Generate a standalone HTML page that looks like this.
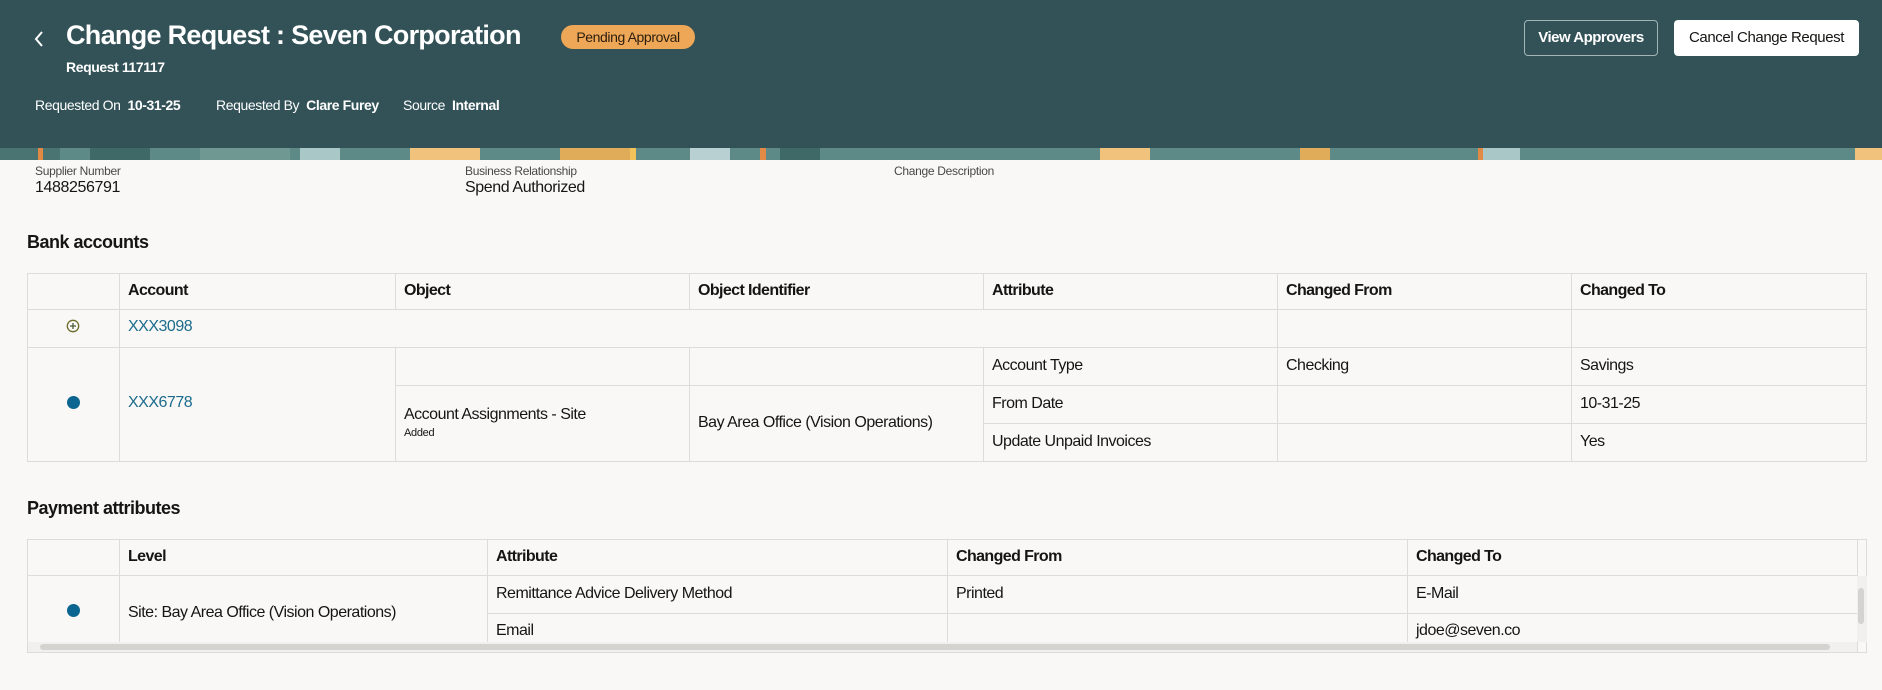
<!DOCTYPE html>
<html><head><meta charset="utf-8">
<style>
*{margin:0;padding:0;box-sizing:border-box}
body{width:1882px;height:690px;background:#f9f8f6;font-family:"Liberation Sans",sans-serif;color:#161513;position:relative;overflow:hidden}
.a{position:absolute;white-space:nowrap}
.hdr{position:absolute;left:0;top:0;width:1882px;height:148px;background:#325257}
.band{position:absolute;left:0;top:148px;width:1882px;height:12px;background:#5d8a86;overflow:hidden}
.band i{position:absolute;top:0;height:12px;display:block}
.w{color:#fff}
.tbl{position:absolute;border:1px solid #dedcd8;background:#f9f8f6}
.hl{position:absolute;height:1px;background:#dedcd8}
.vl{position:absolute;width:1px;background:#dedcd8}
.t{position:absolute;font-size:16px;white-space:nowrap;letter-spacing:-0.5px}
.th{font-weight:bold;letter-spacing:-0.6px}
.lnk{color:#1c6b8c}
</style></head><body>
<div class="hdr"></div>
<div class="band">
<i style="left:0;width:60px;background:#4a7471"></i>
<i style="left:38px;width:5px;background:#e08a45"></i>
<i style="left:90px;width:60px;background:#3f6966"></i>
<i style="left:200px;width:90px;background:#6f9893"></i>
<i style="left:300px;width:40px;background:#a9c7c6"></i>
<i style="left:410px;width:70px;background:#f0c27c"></i>
<i style="left:560px;width:70px;background:#e0ac5a"></i>
<i style="left:630px;width:6px;background:#f2c35a"></i>
<i style="left:690px;width:40px;background:#b8d0d2"></i>
<i style="left:760px;width:6px;background:#e08a45"></i>
<i style="left:780px;width:40px;background:#3f6966"></i>
<i style="left:1480px;width:40px;background:#a9c7c6"></i>
<i style="left:1478px;width:5px;background:#e08a45"></i>
<i style="left:1855px;width:27px;background:#f0c27c"></i>
<i style="left:1100px;width:50px;background:#f0c27c"></i>
<i style="left:1300px;width:30px;background:#e0ac5a"></i>
</div>

<svg class="a" style="left:33px;top:30px" width="12" height="18" viewBox="0 0 12 18"><path d="M9 2 L3 9 L9 16" stroke="#fff" stroke-width="2" fill="none"/></svg>
<div class="a w" style="left:66px;top:20px;font-size:27px;font-weight:bold;letter-spacing:-0.7px">Change Request : Seven Corporation</div>
<div class="a" style="left:561px;top:25px;width:134px;height:24px;border-radius:12px;background:#eda756;color:#2b1d0e;font-size:14px;line-height:24px;text-align:center;letter-spacing:-0.4px">Pending Approval</div>
<div class="a w" style="left:66px;top:59px;font-size:14px;font-weight:bold;letter-spacing:-0.4px">Request 117117</div>
<div class="a w" style="left:35px;top:97px;font-size:14px;letter-spacing:-0.4px">Requested On&nbsp; <b>10-31-25</b></div>
<div class="a w" style="left:216px;top:97px;font-size:14px;letter-spacing:-0.4px">Requested By&nbsp; <b>Clare Furey</b></div>
<div class="a w" style="left:403px;top:97px;font-size:14px;letter-spacing:-0.4px">Source&nbsp; <b>Internal</b></div>

<div class="a w" style="left:1524px;top:20px;width:134px;height:36px;border:1px solid #a3b5b7;border-radius:4px;font-size:15px;font-weight:bold;line-height:34px;text-align:center;letter-spacing:-0.5px">View Approvers</div>
<div class="a" style="left:1674px;top:20px;width:185px;height:36px;background:#fff;border-radius:4px;font-size:15px;line-height:36px;text-align:center;letter-spacing:-0.4px;color:#161513">Cancel Change Request</div>

<div class="a" style="left:35px;top:164px;font-size:12px;color:#4a4845;letter-spacing:-0.3px">Supplier Number</div>
<div class="a" style="left:35px;top:179px;font-size:16px;letter-spacing:-0.4px">1488256791</div>
<div class="a" style="left:465px;top:164px;font-size:12px;color:#4a4845;letter-spacing:-0.3px">Business Relationship</div>
<div class="a" style="left:465px;top:179px;font-size:16px;letter-spacing:-0.4px">Spend Authorized</div>
<div class="a" style="left:894px;top:164px;font-size:12px;color:#4a4845;letter-spacing:-0.3px">Change Description</div>

<div class="a" style="left:27px;top:232px;font-size:18px;font-weight:bold;letter-spacing:-0.5px">Bank accounts</div>

<div class="tbl" style="left:27px;top:273px;width:1840px;height:189px"></div>
<div class="hl" style="left:27px;top:309px;width:1840px"></div>
<div class="hl" style="left:27px;top:347px;width:1840px"></div>
<div class="hl" style="left:395px;top:385px;width:1472px"></div>
<div class="hl" style="left:983px;top:423px;width:884px"></div>
<div class="vl" style="left:119px;top:273px;height:189px"></div>
<div class="vl" style="left:395px;top:273px;height:36px"></div>
<div class="vl" style="left:395px;top:347px;height:115px"></div>
<div class="vl" style="left:689px;top:273px;height:36px"></div>
<div class="vl" style="left:689px;top:347px;height:115px"></div>
<div class="vl" style="left:983px;top:273px;height:36px"></div>
<div class="vl" style="left:983px;top:347px;height:115px"></div>
<div class="vl" style="left:1277px;top:273px;height:189px"></div>
<div class="vl" style="left:1571px;top:273px;height:189px"></div>

<div class="t th" style="left:128px;top:282px">Account</div>
<div class="t th" style="left:404px;top:282px">Object</div>
<div class="t th" style="left:698px;top:282px">Object Identifier</div>
<div class="t th" style="left:992px;top:282px">Attribute</div>
<div class="t th" style="left:1286px;top:282px">Changed From</div>
<div class="t th" style="left:1580px;top:282px">Changed To</div>

<svg class="a" style="left:66px;top:319px" width="14" height="14" viewBox="0 0 14 14"><circle cx="7" cy="7" r="5.7" fill="none" stroke="#6b6b2a" stroke-width="1.3"/><path d="M7 4v6M4 7h6" stroke="#4a5a3a" stroke-width="1.3"/></svg>
<div class="t lnk" style="left:128px;top:318px">XXX3098</div>

<div class="a" style="left:67px;top:396px;width:13px;height:13px;border-radius:50%;background:#0c6590"></div>
<div class="t lnk" style="left:128px;top:394px">XXX6778</div>
<div class="t" style="left:404px;top:406px">Account Assignments - Site</div>
<div class="a" style="left:404px;top:427px;font-size:11px;letter-spacing:-0.3px">Added</div>
<div class="t" style="left:698px;top:414px">Bay Area Office (Vision Operations)</div>
<div class="t" style="left:992px;top:357px">Account Type</div>
<div class="t" style="left:1286px;top:357px">Checking</div>
<div class="t" style="left:1580px;top:357px">Savings</div>
<div class="t" style="left:992px;top:395px">From Date</div>
<div class="t" style="left:1580px;top:395px">10-31-25</div>
<div class="t" style="left:992px;top:433px">Update Unpaid Invoices</div>
<div class="t" style="left:1580px;top:433px">Yes</div>

<div class="a" style="left:27px;top:498px;font-size:18px;font-weight:bold;letter-spacing:-0.5px">Payment attributes</div>

<div class="tbl" style="left:27px;top:539px;width:1840px;height:114px"></div>
<div class="hl" style="left:27px;top:575px;width:1830px"></div>
<div class="hl" style="left:487px;top:613px;width:1370px"></div>
<div class="vl" style="left:119px;top:539px;height:103px"></div>
<div class="vl" style="left:487px;top:539px;height:103px"></div>
<div class="vl" style="left:947px;top:539px;height:103px"></div>
<div class="vl" style="left:1407px;top:539px;height:103px"></div>
<div class="vl" style="left:1857px;top:539px;height:113px"></div>
<div class="t th" style="left:128px;top:548px">Level</div>
<div class="t th" style="left:496px;top:548px">Attribute</div>
<div class="t th" style="left:956px;top:548px">Changed From</div>
<div class="t th" style="left:1416px;top:548px">Changed To</div>
<div class="a" style="left:67px;top:604px;width:13px;height:13px;border-radius:50%;background:#0c6590"></div>
<div class="t" style="left:128px;top:604px">Site: Bay Area Office (Vision Operations)</div>
<div class="t" style="left:496px;top:585px">Remittance Advice Delivery Method</div>
<div class="t" style="left:956px;top:585px">Printed</div>
<div class="t" style="left:1416px;top:585px">E-Mail</div>
<div class="t" style="left:496px;top:622px">Email</div>
<div class="t" style="left:1416px;top:622px">jdoe@seven.co</div>
<div class="a" style="left:28px;top:642px;width:1829px;height:10px;background:#f1f0ee"></div>
<div class="a" style="left:40px;top:644px;width:1790px;height:6px;border-radius:3px;background:#d4d3d0"></div>
<div class="a" style="left:1857px;top:576px;width:10px;height:66px;background:#f1f0ee"></div>
<div class="a" style="left:1858px;top:588px;width:6px;height:36px;border-radius:3px;background:#d4d3d0"></div>
</body></html>
